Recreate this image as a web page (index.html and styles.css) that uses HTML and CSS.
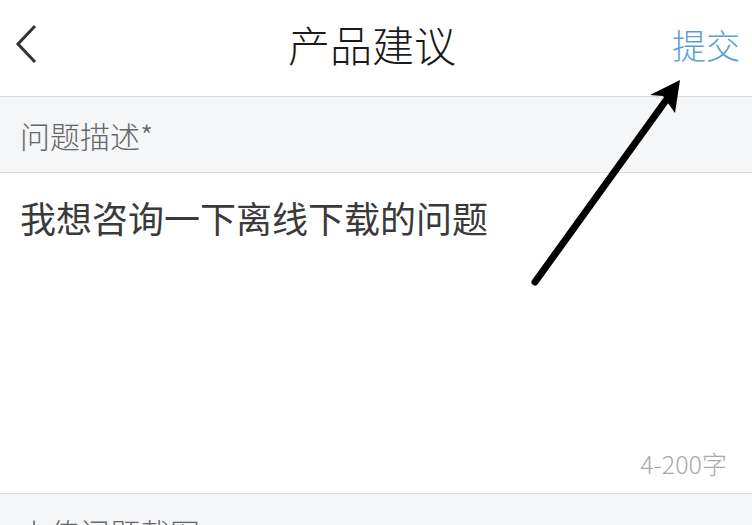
FILE: index.html
```html
<!DOCTYPE html>
<html lang="zh-CN">
  <head>
    <meta charset="UTF-8" />
    <meta name="viewport" content="width=device-width, initial-scale=1.0" />
    <title>产品建议</title>
    <link rel="stylesheet" href="styles.css">
  </head>
  <body>
    <div class="page">
      <header class="topbar">
        <a class="back" href="#">
          <svg width="24" height="40" viewBox="0 0 24 40">
            <path d="M21 3 L4 21 L21 39" fill="none" stroke="#333" stroke-width="3" />
          </svg>
        </a>
        <h1 class="title">产品建议</h1>
        <a class="submit" href="#">提交</a>
      </header>

      <div class="section-head">问题描述*</div>

      <div class="editor">
        <div class="editor-text">我想咨询一下离线下载的问题</div>
        <div class="counter">4-200字</div>
      </div>

      <div class="section-head">上传问题截图</div>

      <!-- annotation arrow drawn over the page -->
      <svg class="arrow" width="752" height="525" viewBox="0 0 752 525">
        <line x1="535" y1="282" x2="672" y2="92" stroke="#000" stroke-width="7" stroke-linecap="round" />
        <path d="M680 80 L650 95 L663 96 L675 113 Z" fill="#000" />
      </svg>
    </div>
  </body>
</html>
```

FILE: styles.css
```css
body {
  margin: 0;
  font-family: "Noto Sans CJK SC", "Noto Sans", sans-serif;
  font-weight: 300;
  background-color: #fff;
}
.page {
  position: relative;
  width: 752px;
  height: 525px;
  overflow: hidden;
}
.topbar {
  height: 96px;
  display: flex;
  align-items: center;
  justify-content: space-between;
  padding: 0 12px 0 14px;
  border-bottom: 1px solid #dcdcdc;
  position: relative;
}
.back {
  display: flex;
  width: 60px;
  margin-top: -10px;
}
.title {
  position: absolute;
  left: 0;
  right: 8px;
  margin: -10px 0 0;
  text-align: center;
  font-size: 42px;
  font-weight: 300;
  color: #1a1a1a;
  pointer-events: none;
}
.submit {
  font-size: 34px;
  color: #5b9fd9;
  text-decoration: none;
  margin-top: -8px;
}
.section-head {
  height: 75px;
  display: flex;
  align-items: center;
  padding-left: 20px;
  background-color: #f5f6f8;
  color: #666;
  font-size: 30px;
  border-bottom: 1px solid #dcdcdc;
}
.editor {
  height: 321px;
  display: flex;
  flex-direction: column;
  justify-content: space-between;
  padding: 0 25px 0 20px;
  border-bottom: 1px solid #dcdcdc;
  box-sizing: border-box;
}
.editor-text {
  margin-top: 18px;
  font-size: 36px;
  font-weight: 400;
  color: #3a3a3a;
}
.counter {
  align-self: flex-end;
  margin-bottom: 12px;
  font-size: 25px;
  color: #aaa;
}
.arrow {
  position: absolute;
  left: 0;
  top: 0;
  pointer-events: none;
}
```
